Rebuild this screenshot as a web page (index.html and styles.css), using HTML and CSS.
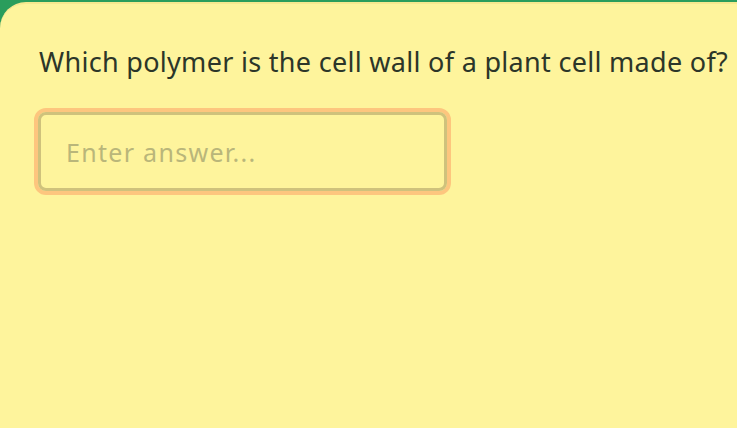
FILE: index.html
```html
<!DOCTYPE html>
<html>
<head>
<meta charset="utf-8">
<link rel="stylesheet" href="styles.css">
</head>
<body>
<div class="card">
  <p class="question">Which polymer is the cell wall of a plant cell made of?</p>
  <div class="field">
    <input class="answer" type="text" placeholder="Enter answer...">
  </div>
</div>
</body>
</html>
```
FILE: styles.css
```css
html, body {
  margin: 0;
  padding: 0;
  height: 100%;
  overflow: hidden;
}
body {
  background: #2a9d5c;
  font-family: "Noto Sans", "DejaVu Sans", sans-serif;
}
.card {
  margin-top: 2px;
  width: 800px;
  height: 600px;
  background: #fef49c;
  border-top: 2px solid #f6e88f;
  border-top-left-radius: 26px;
  box-sizing: border-box;
  padding: 40px 0 0 39px;
}
.question {
  margin: 0;
  font-size: 27px;
  line-height: 36px;
  color: #2c3629;
  letter-spacing: 0.3px;
  white-space: nowrap;
}
.field {
  margin-top: 28px;
  width: 409px;
  height: 79px;
  border: 4px solid #fdc67e;
  border-radius: 12px;
  margin-left: -5px;
}
.answer {
  display: block;
  box-sizing: border-box;
  width: 100%;
  height: 100%;
  margin: 0;
  border: 3px solid #cfc27c;
  border-radius: 8px;
  background: #fef49c;
  padding: 0 0 0 25px;
  font-family: inherit;
  font-size: 25px;
  letter-spacing: 1.3px;
  color: #2c3629;
  outline: none;
}
.answer::placeholder {
  color: #b9b67a;
}
```
